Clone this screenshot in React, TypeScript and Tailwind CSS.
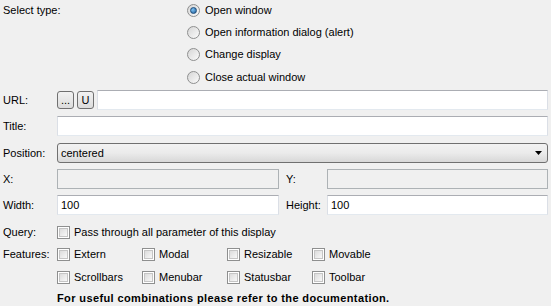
import React from "react";

const font = { fontFamily: '"Liberation Sans", Arial, sans-serif' };

function Radio({ checked, label }: { checked?: boolean; label: string }) {
  return (
    <div className="flex items-center h-[22px]">
      <div className="w-[13px] h-[13px] rounded-full border border-[#8e8f8f] bg-gradient-to-br from-[#d6d6d6] to-[#fbfbfb] flex items-center justify-center">
        {checked && (
          <div className="w-[7px] h-[7px] rounded-full bg-[radial-gradient(circle_at_35%_35%,#7ec3f5,#1c5a96)] border border-[#1f4d7a]" />
        )}
      </div>
      <span className="ml-[5px]">{label}</span>
    </div>
  );
}

function Check({ label }: { label?: string }) {
  return (
    <div className="flex items-center">
      <div className="w-[13px] h-[13px] border border-[#8e8f8f] bg-white p-[1px]">
        <div className="w-full h-full bg-gradient-to-br from-[#dcdcdc] to-[#f8f8f8] border border-[#c5c5c5]" />
      </div>
      {label && <span className="ml-[4px]">{label}</span>}
    </div>
  );
}

function Input({ value, disabled, className }: { value?: string; disabled?: boolean; className?: string }) {
  return (
    <div
      className={
        "h-[20px] border flex items-center px-[3px] " +
        (disabled
          ? "bg-[#f0f0f0] border-[#adb2b5] "
          : "bg-white border-t-[#abadb3] border-l-[#dbdfe6] border-r-[#dbdfe6] border-b-[#e3e9ef] ") +
        (className || "")
      }
    >
      {value}
    </div>
  );
}

function Btn({ children }: { children: React.ReactNode }) {
  return (
    <div className="w-[17px] h-[18px] rounded-[3px] border border-[#707070] bg-gradient-to-b from-[#f2f2f2] to-[#dcdcdc] flex items-center justify-center text-[11px] leading-none">
      {children}
    </div>
  );
}

export default function App() {
  return (
    <div className="w-[551px] h-[306px] bg-[#f0f0f0] text-[11px] text-black overflow-hidden relative" style={font}>
      <div className="flex pl-[3px]">
        <div className="w-[184px] h-[22px] flex items-center -mt-[1px]">Select type:</div>
        <div className="flex flex-col -mt-[1px]">
          <Radio checked label="Open window" />
          <Radio label="Open information dialog (alert)" />
          <Radio label="Change display" />
          <div className="mt-[1px]"><Radio label="Close actual window" /></div>
        </div>
      </div>

      <div className="flex flex-col gap-[6px] pl-[3px] pr-[3px] mt-[2px]">
        <div className="flex items-center h-[20px]">
          <div className="w-[54px]">URL:</div>
          <div className="flex gap-[3px] mr-[3px]">
            <Btn>...</Btn>
            <Btn>U</Btn>
          </div>
          <Input className="flex-1" />
        </div>
        <div className="flex items-center h-[20px]">
          <div className="w-[54px]">Title:</div>
          <Input className="flex-1" />
        </div>
        <div className="flex items-center h-[20px] mt-[1px]">
          <div className="w-[54px]">Position:</div>
          <div className="flex-1 h-[20px] rounded-[3px] border border-[#707070] bg-gradient-to-b from-[#f2f2f2] via-[#ebebeb] to-[#d8d8d8] flex items-center pl-[3px] pr-[5px]">
            <span className="flex-1">centered</span>
            <svg width="7" height="4" viewBox="0 0 7 4">
              <path d="M0 0H7L3.5 4Z" fill="#000" />
            </svg>
          </div>
        </div>
        <div className="flex items-center h-[20px]">
          <div className="w-[54px]">X:</div>
          <Input disabled className="w-[222px]" />
          <div className="w-[48px] pl-[7px]">Y:</div>
          <Input disabled className="flex-1" />
        </div>
        <div className="flex items-center h-[20px]">
          <div className="w-[54px]">Width:</div>
          <Input value="100" className="w-[222px]" />
          <div className="w-[48px] pl-[7px]">Height:</div>
          <Input value="100" className="flex-1" />
        </div>
      </div>

      <div className="pl-[3px] mt-[6px] flex flex-col">
        <div className="flex items-center h-[22px]">
          <div className="w-[54px]">Query:</div>
          <Check label="Pass through all parameter of this display" />
        </div>
        <div className="flex items-center h-[22px]">
          <div className="w-[54px]">Features:</div>
          <div className="w-[85px]"><Check label="Extern" /></div>
          <div className="w-[85px]"><Check label="Modal" /></div>
          <div className="w-[85px]"><Check label="Resizable" /></div>
          <div className="w-[85px]"><Check label="Movable" /></div>
        </div>
        <div className="flex items-center h-[22px] mt-[1px]">
          <div className="w-[54px]" />
          <div className="w-[85px]"><Check label="Scrollbars" /></div>
          <div className="w-[85px]"><Check label="Menubar" /></div>
          <div className="w-[85px]"><Check label="Statusbar" /></div>
          <div className="w-[85px]"><Check label="Toolbar" /></div>
        </div>
        <div className="flex items-center h-[20px]">
          <div className="w-[54px]" />
          <span className="font-bold tracking-[0.38px]">For useful combinations please refer to the documentation.</span>
        </div>
      </div>
    </div>
  );
}
